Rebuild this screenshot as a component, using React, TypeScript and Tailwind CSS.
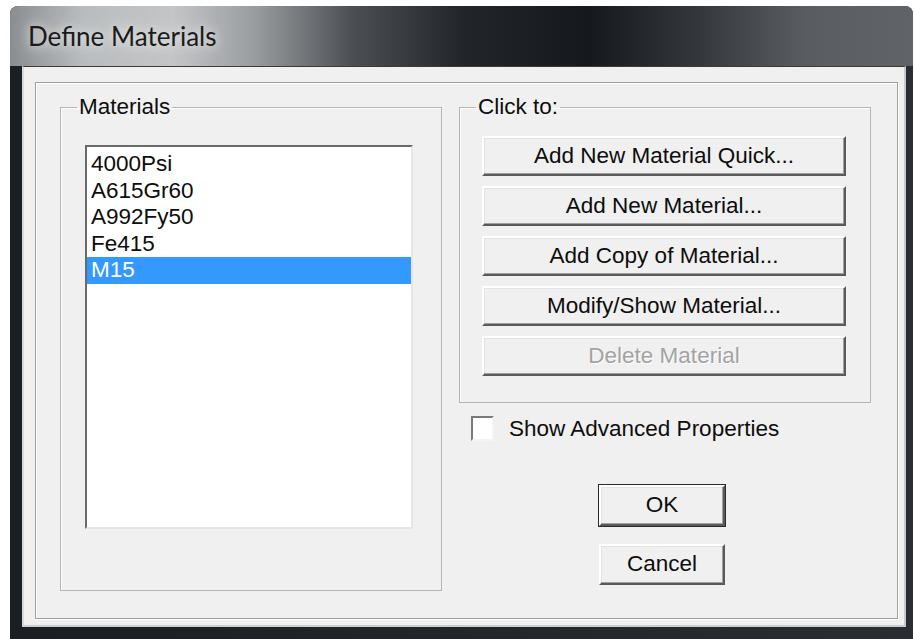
import React from 'react';

const materials = ['4000Psi', 'A615Gr60', 'A992Fy50', 'Fe415', 'M15'];
const actions = [
  { label: 'Add New Material Quick...', disabled: false },
  { label: 'Add New Material...', disabled: false },
  { label: 'Add Copy of Material...', disabled: false },
  { label: 'Modify/Show Material...', disabled: false },
  { label: 'Delete Material', disabled: true },
];

// classic raised 3D push button
function PushButton({ label, disabled, isDefault, className }: { label: string; disabled?: boolean; isDefault?: boolean; className?: string }) {
  return (
    <button
      type="button"
      className={`flex items-center justify-center bg-[#f0f0f0] border-2 border-t-white border-l-white border-b-[#5a5a5a] border-r-[#5a5a5a] shadow-[inset_-1px_-1px_0_#a0a0a0,inset_1px_1px_0_#e3e3e3] text-[22.5px] leading-none ${
        disabled ? 'text-[#a3a3a3] [text-shadow:1px_1px_0_#fff]' : 'text-[#0d0d0d]'
      } ${isDefault ? 'outline outline-1 outline-[#2a2a2a]' : ''} ${className ?? ''}`}
    >
      {label}
    </button>
  );
}

export default function App() {
  const selected = 4;

  return (
    <div className="w-[915px] h-[639px] bg-white pt-[6px] pl-[10px] pr-[2px] font-['Liberation_Sans',Arial,sans-serif] overflow-hidden">
      <div className="h-[633px] flex flex-col rounded-t-[8px] overflow-hidden bg-[#181b1f]">
        {/* title bar */}
        <div className="h-[60px] shrink-0 flex items-center pl-[18px] bg-[linear-gradient(to_right,#8a8d90_0%,#b9bcbe_8%,#c3c5c7_18%,#9a9da0_27%,#4b4f53_38%,#22262a_50%,#15181c_64%,#33373b_76%,#595d61_88%,#606468_100%)]">
          <span className="font-['Lato','Open_Sans',sans-serif] text-[26px] text-[#1b1b1b] [text-shadow:0_0_10px_#e8e8e8,0_0_18px_#dcdcdc]">
            Define Materials
          </span>
        </div>

        {/* client area between the side frames */}
        <div className="flex-1 flex pl-[12px] pr-[7px] pb-[12px] bg-[linear-gradient(to_right,#1b1e22_0%,#1b1e22_2%,#2a2d31_100%)]">
          <div className="flex-1 bg-[#f0f0f0] border-t border-t-[#3a3a3a] border-l-2 border-l-[#d9d9d9] border-r-2 border-r-[#c9c9c9] border-b-2 border-b-[#cfcfcf] pt-[15px] pl-[11px] pr-[6px] pb-[6px]">
            <div className="h-full bg-[#f0f0f0] border border-[#a0a0a0] shadow-[1px_1px_0_#fff,inset_1px_1px_0_#fff] flex pl-[24px] pt-[11px] text-[22.5px] text-[#0d0d0d]">
              {/* materials group */}
              <fieldset className="w-[382px] h-[497px] border border-[#b4b4b4] shadow-[inset_1px_1px_0_#fff]">
                <legend className="ml-[16px] px-[2px] leading-[26px]">Materials</legend>
                <div className="pl-[24px] pt-[25px]">
                  <div className="w-[328px] h-[384px] bg-white border-2 border-t-[#6a6a6a] border-l-[#6a6a6a] border-b-[#e6e6e6] border-r-[#e6e6e6] pt-[4px]">
                    {materials.map((m, i) => (
                      <div
                        key={m}
                        className={`h-[26.5px] leading-[26.5px] pl-[4px] ${i === selected ? 'bg-[#3399ff] text-white' : ''}`}
                      >
                        {m}
                      </div>
                    ))}
                  </div>
                </div>
              </fieldset>

              <div className="ml-[17px] w-[412px] flex flex-col">
                <fieldset className="h-[309px] border border-[#b4b4b4] shadow-[inset_1px_1px_0_#fff]">
                  <legend className="ml-[16px] px-[2px] leading-[26px]">Click to:</legend>
                  <div className="pl-[22px] pt-[16px] flex flex-col gap-[10px]">
                    {actions.map((a) => (
                      <PushButton key={a.label} label={a.label} disabled={a.disabled} className="w-[364px] h-[40px]" />
                    ))}
                  </div>
                </fieldset>

                <label className="mt-[13px] ml-[12px] h-[25px] leading-[25px] flex items-center gap-[15px]">
                  <span className="w-[23px] h-[25px] bg-white border-2 border-t-[#7a7a7a] border-l-[#7a7a7a] border-b-[#f4f4f4] border-r-[#f4f4f4]" />
                  <span>Show Advanced Properties</span>
                </label>

                <PushButton label="OK" isDefault className="mt-[44px] ml-[140px] w-[126px] h-[41px]" />
                <PushButton label="Cancel" className="mt-[18px] ml-[140px] w-[126px] h-[41px]" />
              </div>
            </div>
          </div>
        </div>
      </div>
    </div>
  );
}
